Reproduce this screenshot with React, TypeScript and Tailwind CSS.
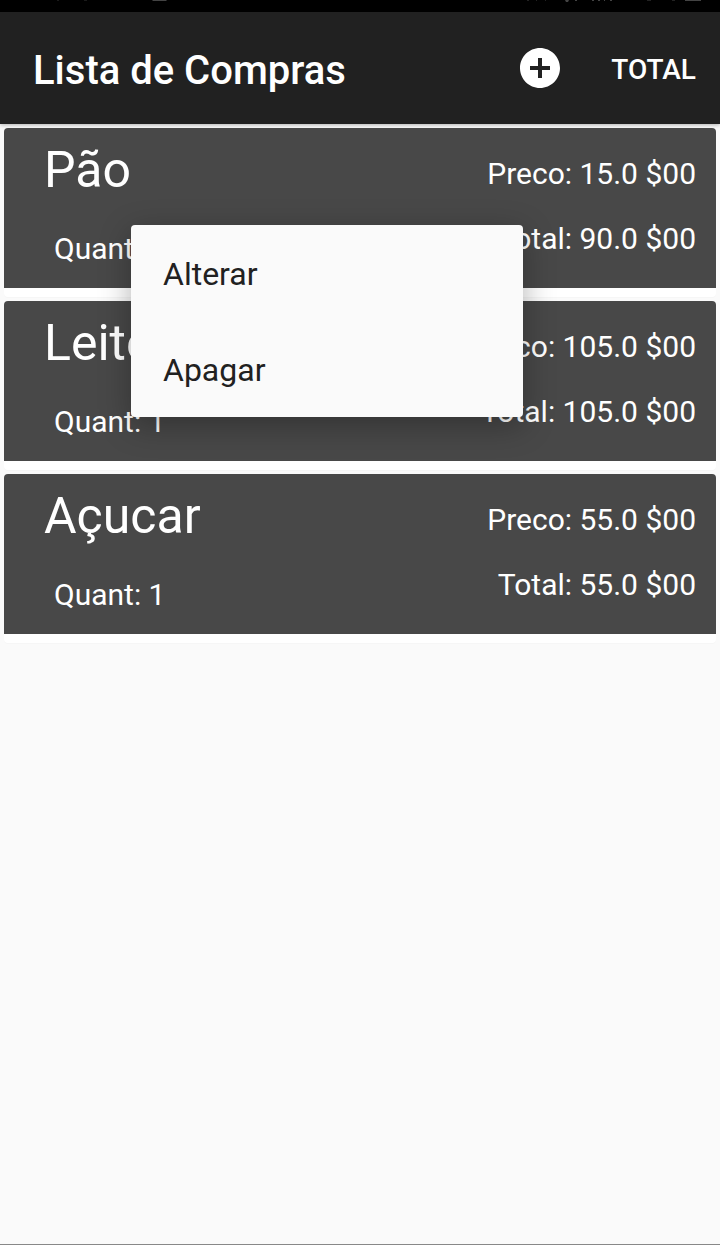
type Item = { name: string; quantity: number; price: string; total: string };

const items: Item[] = [
  { name: "Pão", quantity: 6, price: "15.0", total: "90.0" },
  { name: "Leite", quantity: 1, price: "105.0", total: "105.0" },
  { name: "Açucar", quantity: 1, price: "55.0", total: "55.0" },
];

function StatusBar() {
  return (
    <div className="flex h-3 justify-between bg-black">
      <svg width="180" height="3" aria-hidden="true">
        <path d="M57 0h2v1h-2zM84 0h3v1h-3z" fill="#1a1a1a" />
        <path d="M152 0h15l-1 1h-13z" fill="#444" />
      </svg>
      <svg width="200" height="3" aria-hidden="true">
        <path d="M7 0h2v1h-2zM16 0h1v1h-1zM25 0h1v1h-1zM127 0h4v1h-4zM152 0h3v1h-3z" fill="#222" />
        <path d="M45 0h4l-1 2h-2zM55 0h2v1h-2zM72 0h2v1h-2zM78 0h2v1h-2zM84 0h1v1h-1zM90 0h2v1h-2z" fill="#444" />
        <path d="M165 0h16v1h-16z" fill="#444" />
      </svg>
    </div>
  );
}

function AppBar() {
  return (
    <header className="relative flex h-28 items-center bg-[#212121] pr-6 pl-[33px] text-white shadow-[0_1px_4px_rgba(0,0,0,0.3)]">
      <h1 className="flex-1 pt-1.5 text-[40px] leading-12 font-medium">Lista de Compras</h1>
      <button type="button" aria-label="Adicionar" className="mr-[47px] size-12">
        <svg viewBox="0 0 24 24" className="size-12" fill="currentColor" aria-hidden="true">
          <path d="M12 2C6.48 2 2 6.48 2 12s4.48 10 10 10 10-4.48 10-10S17.52 2 12 2zm5 11h-4v4h-2v-4H7v-2h4V7h2v4h4v2z" />
        </svg>
      </button>
      <button type="button" className="pt-1 text-[28px] leading-8 font-medium">TOTAL</button>
    </header>
  );
}

function ItemCard({ item }: { item: Item }) {
  return (
    <li className="rounded-sm bg-white pb-[9px] shadow-[0_1px_1px_rgba(0,0,0,0.02)]">
      <div className="flex justify-between rounded-t-sm bg-[#484848] pr-5 pl-10 text-[30px] leading-[38px] text-white">
        <div className="flex flex-col gap-[30px] pt-3 pb-5">
          <h2 className="text-[50px] leading-[60px]">{item.name}</h2>
          <p className="pl-[10px]">Quant: {item.quantity}</p>
        </div>
        <div className="flex flex-col gap-[27px] pt-[27px] text-right">
          <p>Preco: {item.price} $00</p>
          <p>Total: {item.total} $00</p>
        </div>
      </div>
    </li>
  );
}

function ContextMenu() {
  return (
    <div
      role="menu"
      className="absolute top-[101px] left-[131px] flex w-[392px] flex-col rounded-sm bg-[#fafafa] text-[32px] leading-10 text-[#212121] shadow-[0_8px_32px_rgba(0,0,0,0.3)]"
    >
      <button type="button" role="menuitem" className="h-24 px-8 pt-0.5 text-left">Alterar</button>
      <button type="button" role="menuitem" className="h-24 px-8 pt-0.5 text-left">Apagar</button>
    </div>
  );
}

export default function App() {
  return (
    <div className="flex min-h-screen flex-col border-b border-[#888] bg-[#fafafa] font-[Roboto,sans-serif]">
      <StatusBar />
      <AppBar />
      <main className="relative flex-1">
        <ul className="flex flex-col gap-1 p-1">
          {items.map((item) => (
            <ItemCard key={item.name} item={item} />
          ))}
        </ul>
        <ContextMenu />
      </main>
    </div>
  );
}
